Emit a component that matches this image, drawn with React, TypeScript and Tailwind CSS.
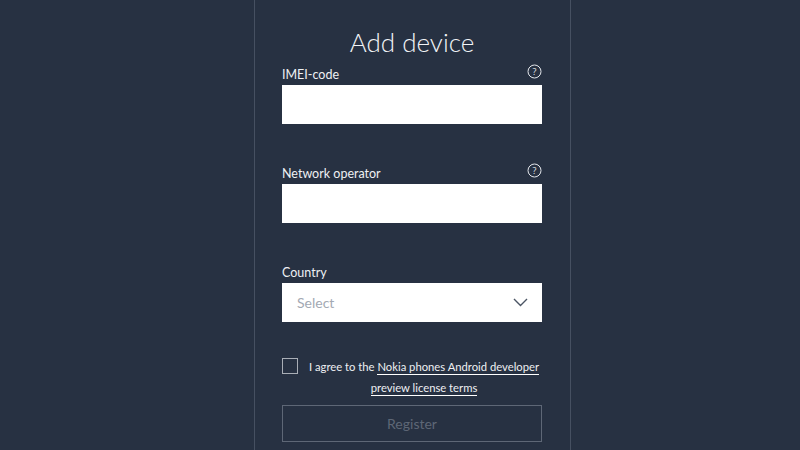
function Help() {
  return (
    <svg width="15" height="15" viewBox="0 0 15 15" fill="none" className="mb-[6px]">
      <circle cx="7.5" cy="7.5" r="6.5" stroke="#e4e7ec" strokeWidth="1" />
      <text x="7.5" y="10.5" textAnchor="middle" fontSize="9" fill="#e4e7ec" fontFamily="'Open Sans', sans-serif">?</text>
    </svg>
  );
}

function Label({ text, help }: { text: string; help?: boolean }) {
  return (
    <div className="flex h-[22px] items-end justify-between">
      <span className="text-[12.5px] leading-[21px] text-[#eef0f3]">{text}</span>
      {help && <Help />}
    </div>
  );
}

export default function App() {
  return (
    <div className="h-[450px] w-full overflow-hidden bg-[#273142] pl-[254px] font-['Lato',sans-serif]">
      <div className="flex h-full w-[317px] flex-col border-x border-[#465061] pr-[28px] pl-[27px]">
        <h1 className="mt-[24px] h-[39px] text-center text-[26px] leading-[37px] font-light text-[#f2f4f7]">Add device</h1>
        <Label text="IMEI-code" help />
        <div className="h-[39px] bg-white" />
        <div className="mt-[38px]">
          <Label text="Network operator" help />
        </div>
        <div className="h-[39px] bg-white" />
        <div className="mt-[38px]">
          <Label text="Country" />
        </div>
        <div className="flex h-[39px] items-center justify-between bg-white pr-[14px] pl-[15px]">
          <span className="mb-[1px] text-[14px] text-[#a3a9b3]">Select</span>
          <svg width="15" height="9" viewBox="0 0 15 9" fill="none">
            <path d="M1 1l6.5 6.5L14 1" stroke="#4b5564" strokeWidth="1.4" />
          </svg>
        </div>
        <div className="mt-[36px] flex">
          <div className="h-[16px] w-[16px] shrink-0 border border-[#a9aeb6]" />
          <div className="mt-[-2px] ml-[8px] flex-1 text-center text-[11.25px] leading-[21px] text-[#eef0f3]">
            <p className="whitespace-nowrap">
              I agree to the <span className="border-b border-white pb-[1px]">Nokia phones Android developer</span>
            </p>
            <p className="whitespace-nowrap">
              <span className="border-b border-white pb-[1px]">preview license terms</span>
            </p>
          </div>
        </div>
        <button className="mt-[7px] h-[37px] shrink-0 border border-[#5e6776] text-[14px] text-[#5e6776]">Register</button>
      </div>
    </div>
  );
}
